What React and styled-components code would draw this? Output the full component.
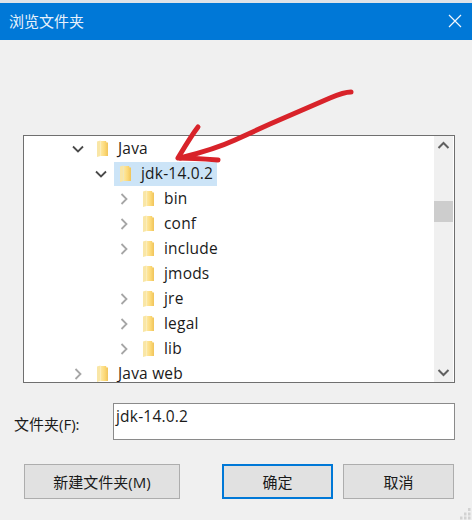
import React from "react";
import styled, { createGlobalStyle } from "styled-components";

const Global = createGlobalStyle`
  html, body { margin: 0; padding: 0; background: #f0f0f0; }
  #root { width: 472px; height: 520px; overflow: hidden; }
`;

const FONT = `"Open Sans", "Noto Sans", "Noto Sans CJK SC", sans-serif`;

const Dialog = styled.div`
  position: relative;
  width: 472px;
  height: 520px;
  background: #f0f0f0;
  font-family: ${FONT};
  color: #1a1a1a;
  display: flex;
  flex-direction: column;
  overflow: hidden;
`;
const TopStrip = styled.div`
  height: 3px;
  background: #dfe3e8;
  flex: none;
`;
const TitleBar = styled.div`
  height: 37px;
  flex: none;
  background: #0078d7;
  color: #e8f2fb;
  display: flex;
  align-items: center;
  justify-content: space-between;
  padding: 0 10px 2px 9px;
  box-sizing: border-box;
  font-size: 15px;
`;
const Body = styled.div`
  flex: 1;
  display: flex;
  flex-direction: column;
  padding: 95px 17px 0 23px;
`;
const TreePanel = styled.div`
  height: 248px;
  box-sizing: border-box;
  border: 1px solid #6f6f6f;
  background: #fff;
  display: flex;
  overflow: hidden;
`;
const TreeList = styled.div`
  flex: 1;
  min-width: 0;
`;
const Row = styled.div`
  height: 25px;
  display: flex;
  align-items: center;
  padding-left: ${(p) => 47 + p.$level * 23}px;
  font-size: 15.5px;
  letter-spacing: 0.2px;
`;
const Chevron = styled.svg`
  width: 14px;
  height: 14px;
  flex: none;
  fill: none;
  stroke: ${(p) => (p.$open ? "#4a4a4a" : "#a6a6a6")};
  stroke-width: 1.8;
`;
const ChevronSlot = styled.span`
  width: 14px;
  height: 14px;
  flex: none;
`;
const Item = styled.div`
  display: flex;
  align-items: center;
  height: 24px;
  margin-left: 6px;
  padding: 0 4px 0 5px;
  background: ${(p) => (p.$selected ? "#cce4f7" : "transparent")};
`;
const ItemLabel = styled.span`
  padding-bottom: 2px;
`;
const FolderIcon = styled.svg`
  width: 13px;
  height: 18px;
  flex: none;
  margin-right: 9px;
`;
const ScrollTrack = styled.div`
  width: 19px;
  margin-right: 1px;
  flex: none;
  background: #f0f0f0;
  display: flex;
  flex-direction: column;
  align-items: center;
  justify-content: space-between;
  position: relative;
`;
const ScrollArrow = styled.svg`
  width: 19px;
  height: 19px;
  flex: none;
  fill: none;
  stroke: #606060;
  stroke-width: 2;
`;
const ScrollThumb = styled.div`
  position: absolute;
  top: 65px;
  left: 0;
  width: 19px;
  height: 21px;
  background: #cdcdcd;
`;
const FieldRow = styled.div`
  display: flex;
  align-items: flex-end;
  margin-top: 20px;
  margin-left: -9px;
`;
const FieldLabel = styled.label`
  width: 99px;
  flex: none;
  font-size: 15px;
  line-height: 20px;
  padding-bottom: 6px;
`;
const FieldInput = styled.div`
  flex: 1;
  height: 37px;
  box-sizing: border-box;
  border: 1px solid #8a8a8a;
  background: #fff;
  padding: 0 2px;
  font-size: 15.5px;
  line-height: 24px;
  letter-spacing: 0.2px;
`;
const Buttons = styled.div`
  display: flex;
  margin-top: 24px;
  margin-left: 1px;
`;
const Button = styled.button`
  box-sizing: border-box;
  height: 35px;
  width: ${(p) => p.$w}px;
  margin-left: ${(p) => p.$ml || 0}px;
  background: #e1e1e1;
  border: ${(p) => (p.$focus ? "2px solid #0078d7" : "1px solid #adadad")};
  font-family: ${FONT};
  font-size: 15px;
  color: #1a1a1a;
  padding: 0;
`;
const Arrow = styled.svg`
  position: absolute;
  left: 0;
  top: 0;
  width: 472px;
  height: 520px;
  pointer-events: none;
  fill: none;
  stroke: #d8232a;
  stroke-linecap: round;
  stroke-linejoin: round;
`;
const Grip = styled.svg`
  position: absolute;
  right: 0;
  bottom: 0;
  width: 12px;
  height: 14px;
  fill: #d2d2d2;
`;

const Folder = () => (
  <FolderIcon viewBox="0 0 13 18">
    <defs>
      <linearGradient id="fg" x1="0" y1="0" x2="1" y2="0">
        <stop offset="0" stopColor="#fde9a4" />
        <stop offset="0.55" stopColor="#fcd978" />
        <stop offset="1" stopColor="#f0c45a" />
      </linearGradient>
    </defs>
    <path d="M1 1.5 L4.5 0.5 L4.5 16 L1 17 Z" fill="#f9e6a6" />
    <path d="M4.5 1 L10 1 L10.5 2.5 L12 2.5 L12 16 L4.5 16 Z" fill="url(#fg)" />
  </FolderIcon>
);

const tree = [
  { label: "Java", level: 0, state: "open" },
  { label: "jdk-14.0.2", level: 1, state: "open", selected: true },
  { label: "bin", level: 2, state: "closed" },
  { label: "conf", level: 2, state: "closed" },
  { label: "include", level: 2, state: "closed" },
  { label: "jmods", level: 2, state: "none" },
  { label: "jre", level: 2, state: "closed" },
  { label: "legal", level: 2, state: "closed" },
  { label: "lib", level: 2, state: "closed" },
  { label: "Java web", level: 0, state: "closed" },
];

export default function App() {
  return (
    <Dialog>
      <Global />
      <TopStrip />
      <TitleBar>
        <span>浏览文件夹</span>
        <svg width="14" height="14" viewBox="0 0 14 14" stroke="#f2f8fd" strokeWidth="1.2" fill="none">
          <path d="M1 1 L13 13 M13 1 L1 13" />
        </svg>
      </TitleBar>
      <Body>
        <TreePanel>
          <TreeList>
            {tree.map((r) => (
              <Row key={r.label} $level={r.level}>
                {r.state === "none" ? (
                  <ChevronSlot />
                ) : (
                  <Chevron viewBox="0 0 14 14" $open={r.state === "open"}>
                    <path d={r.state === "open" ? "M2 4.5 L7 9.5 L12 4.5" : "M4.5 2 L9.5 7 L4.5 12"} />
                  </Chevron>
                )}
                <Item $selected={r.selected}>
                  <Folder />
                  <ItemLabel>{r.label}</ItemLabel>
                </Item>
              </Row>
            ))}
          </TreeList>
          <ScrollTrack>
            <ScrollArrow viewBox="0 0 19 19">
              <path d="M4.5 12 L9.5 7 L14.5 12" />
            </ScrollArrow>
            <ScrollThumb />
            <ScrollArrow viewBox="0 0 19 19">
              <path d="M4.5 7 L9.5 12 L14.5 7" />
            </ScrollArrow>
          </ScrollTrack>
        </TreePanel>
        <FieldRow>
          <FieldLabel>文件夹(F):</FieldLabel>
          <FieldInput>jdk-14.0.2</FieldInput>
        </FieldRow>
        <Buttons>
          <Button $w={156}>新建文件夹(M)</Button>
          <Button $w={111} $ml={42} $focus>确定</Button>
          <Button $w={111} $ml={10}>取消</Button>
        </Buttons>
      </Body>
      <Arrow viewBox="0 0 472 520">
        <path d="M351 92 C344 92 337 95 330 98 L270 124 L235 140 C222 146 200 153 180 158" strokeWidth="5" />
        <path d="M198 127 C191 136 184 148 178 158 C190 158 205 159 218 160" strokeWidth="5" />
      </Arrow>
      <Grip viewBox="0 0 12 14">
        <rect x="8" y="2" width="2.5" height="3" />
        <rect x="8" y="6.5" width="2.5" height="3" />
        <rect x="4" y="6.5" width="2.5" height="3" />
        <rect x="0" y="10.5" width="2.5" height="3" />
        <rect x="4" y="10.5" width="2.5" height="3" />
        <rect x="8" y="10.5" width="2.5" height="3" />
      </Grip>
    </Dialog>
  );
}
